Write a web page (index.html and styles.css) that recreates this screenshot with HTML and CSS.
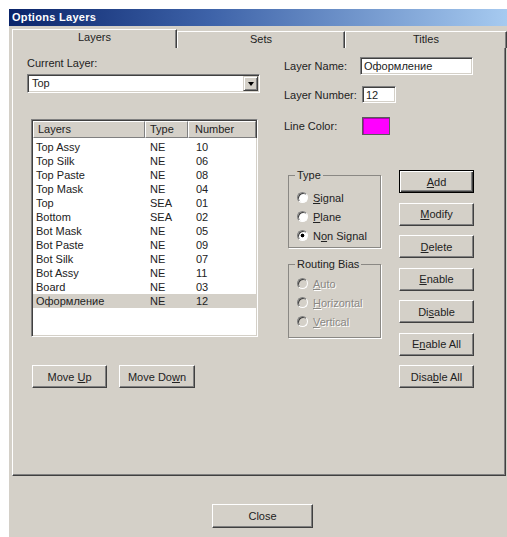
FILE: index.html
```html
<!DOCTYPE html>
<html lang="en">
<head>
<meta charset="utf-8">
<title>Options Layers</title>
<link rel="stylesheet" href="styles.css">
</head>
<body>
<div class="window">
  <div class="titlebar">Options Layers</div>

  <div class="tabs">
    <div class="tab active">Layers</div>
    <div class="tab">Sets</div>
    <div class="tab last">Titles</div>
  </div>

  <div class="panel">
    <div class="col-left">
      <div class="label">Current Layer:</div>
      <div class="combo sunken">
        <span class="combo-text">Top</span>
        <span class="combo-btn"><span class="arrow"></span></span>
      </div>

      <div class="listview sunken">
        <div class="lv-header">
          <div class="hcell">Layers</div>
          <div class="hcell">Type</div>
          <div class="hcell">Number</div>
        </div>
        <div class="lv-body">
          <div class="row"><span>Top Assy</span><span>NE</span><span>10</span></div>
          <div class="row"><span>Top Silk</span><span>NE</span><span>06</span></div>
          <div class="row"><span>Top Paste</span><span>NE</span><span>08</span></div>
          <div class="row"><span>Top Mask</span><span>NE</span><span>04</span></div>
          <div class="row"><span>Top</span><span>SEA</span><span>01</span></div>
          <div class="row"><span>Bottom</span><span>SEA</span><span>02</span></div>
          <div class="row"><span>Bot Mask</span><span>NE</span><span>05</span></div>
          <div class="row"><span>Bot Paste</span><span>NE</span><span>09</span></div>
          <div class="row"><span>Bot Silk</span><span>NE</span><span>07</span></div>
          <div class="row"><span>Bot Assy</span><span>NE</span><span>11</span></div>
          <div class="row"><span>Board</span><span>NE</span><span>03</span></div>
          <div class="row selected"><span>Оформление</span><span>NE</span><span>12</span></div>
        </div>
      </div>

      <div class="move-row">
        <button class="btn move-up">Move <u>U</u>p</button>
        <button class="btn move-down">Move Do<u>w</u>n</button>
      </div>
    </div>

    <div class="col-right">
      <div class="field f-name">
        <span class="flabel">Layer Name:</span>
        <span class="edit sunken name">Оформление</span>
      </div>
      <div class="field f-number">
        <span class="flabel">Layer Number:</span>
        <span class="edit sunken number">12</span>
      </div>
      <div class="field f-color">
        <span class="flabel">Line Color:</span>
        <span class="swatch"></span>
      </div>

      <div class="lower">
        <div class="groups">
          <fieldset class="group type-group">
            <legend>Type</legend>
            <div class="radio"><span class="rb"></span><span><u>S</u>ignal</span></div>
            <div class="radio"><span class="rb"></span><span><u>P</u>lane</span></div>
            <div class="radio"><span class="rb on"></span><span>N<u>o</u>n Signal</span></div>
          </fieldset>
          <fieldset class="group bias-group disabled">
            <legend>Routing Bias</legend>
            <div class="radio"><span class="rb"></span><span class="dim"><u>A</u>uto</span></div>
            <div class="radio"><span class="rb"></span><span class="dim"><u>H</u>orizontal</span></div>
            <div class="radio"><span class="rb"></span><span class="dim"><u>V</u>ertical</span></div>
          </fieldset>
        </div>
        <div class="actions">
          <button class="btn default"><u>A</u>dd</button>
          <button class="btn"><u>M</u>odify</button>
          <button class="btn"><u>D</u>elete</button>
          <button class="btn"><u>E</u>nable</button>
          <button class="btn">Di<u>s</u>able</button>
          <button class="btn">E<u>n</u>able All</button>
          <button class="btn">Disa<u>b</u>le All</button>
        </div>
      </div>
    </div>
  </div>

  <div class="footer">
    <button class="btn close">Close</button>
  </div>
</div>
</body>
</html>
```

FILE: styles.css
```css
html, body {
  margin: 0;
  padding: 0;
  background: #fff;
  overflow: hidden;
}

body {
  font: 11px "Liberation Sans", Arial, sans-serif;
  color: #222;
}

u {
  text-decoration: underline;
  text-underline-offset: 1px;
}

/* dialog frame */
.window {
  margin: 9px 0 0 9px;
  width: 498px;
  height: 528px;
  background: #d4d0c8;
}

.titlebar {
  height: 17px;
  line-height: 17px;
  padding-left: 3px;
  color: #fff;
  font-weight: bold;
  letter-spacing: 0.3px;
  background: linear-gradient(to right, #0a246a 0%, #3d62a8 40%, #a6caf0 100%);
}

/* tab strip */
.tabs {
  display: flex;
  align-items: flex-end;
  height: 19px;
  margin: 3px 0 -1px 3px;
}

.tab {
  box-sizing: border-box;
  width: 168px;
  height: 17px;
  line-height: 15px;
  text-align: center;
  background: #d4d0c8;
  border-top: 1px solid #fff;
  border-left: 1px solid #fff;
  border-right: 1px solid #404040;
  box-shadow: inset -1px 0 #808080;
}

.tab.active {
  position: relative;
  z-index: 1;
  width: 165px;
  height: 19px;
  line-height: 15px;
}

.tab.last {
  flex: 1;
}

/* tab page */
.panel {
  box-sizing: border-box;
  display: flex;
  margin-left: 3px;
  width: 494px;
  height: 429px;
  padding: 9px 0 0 14px;
  border: 1px solid;
  border-color: #fff #404040 #404040 #fff;
  box-shadow: inset -1px -1px #808080;
}

.sunken {
  box-sizing: border-box;
  background: #fff;
  border: 1px solid;
  border-color: #808080 #fff #fff #808080;
  box-shadow: inset 1px 1px #404040, inset -1px -1px #d4d0c8;
}

/* left column */
.col-left {
  width: 233px;
  display: flex;
  flex-direction: column;
}

.label {
  height: 13px;
  line-height: 13px;
}

.combo {
  display: flex;
  align-items: stretch;
  margin-top: 4px;
  height: 19px;
  padding: 1px;
}

.combo-text {
  flex: 1;
  padding-left: 3px;
  line-height: 15px;
}

.combo-btn {
  box-sizing: border-box;
  width: 15px;
  display: flex;
  align-items: center;
  justify-content: center;
  background: #d4d0c8;
  border: 1px solid;
  border-color: #d4d0c8 #404040 #404040 #d4d0c8;
  box-shadow: inset 1px 1px #fff, inset -1px -1px #808080;
}

.arrow {
  width: 0;
  height: 0;
  border-left: 3.5px solid transparent;
  border-right: 3.5px solid transparent;
  border-top: 4px solid #000;
}

.listview {
  margin: 26px 0 0 4px;
  width: 227px;
  height: 218px;
  padding: 1px;
}

.lv-header,
.row {
  display: grid;
  grid-template-columns: 112px 43px 1fr;
}

.lv-header {
  height: 17px;
}

.hcell {
  box-sizing: border-box;
  line-height: 15px;
  padding-left: 4px;
  background: #d4d0c8;
  border: 1px solid;
  border-color: #fff #808080 #808080 #fff;
  box-shadow: 1px 0 #404040;
}

.hcell:nth-child(3) {
  padding-left: 6px;
}

.lv-body {
  padding-top: 2px;
}

.row {
  height: 14px;
  line-height: 14px;
}

.row span:nth-child(1) { padding-left: 3px; }
.row span:nth-child(2) { padding-left: 5px; }
.row span:nth-child(3) { padding-left: 8px; }

.row.selected {
  background: #d4d0c8;
}

.move-row {
  display: flex;
  gap: 12px;
  margin: 28px 0 0 5px;
}

/* push buttons */
.btn {
  box-sizing: border-box;
  height: 23px;
  padding: 0;
  font: inherit;
  color: inherit;
  text-align: center;
  background: #d4d0c8;
  border: 1px solid;
  border-color: #fff #404040 #404040 #fff;
  box-shadow: inset -1px -1px #808080;
}

.btn.default {
  border-color: #000;
  box-shadow: inset 1px 1px #fff, inset -1px -1px #404040, inset -2px -2px #808080;
}

.move-up { width: 75px; }
.move-down { width: 76px; }

/* right column */
.col-right {
  margin-left: 24px;
  display: flex;
  flex-direction: column;
}

.field {
  display: flex;
  align-items: center;
}

.flabel {
  width: 76px;
}

.f-name { height: 18px; }
.f-number { height: 17px; margin-top: 11px; }
.f-color { height: 18px; margin-top: 14px; }

.edit {
  height: 100%;
  line-height: 16px;
  padding-left: 3px;
}

.edit.name { width: 113px; }
.edit.number { width: 34px; margin-left: 2px; }

.swatch {
  box-sizing: border-box;
  width: 28px;
  height: 18px;
  margin-left: 2px;
  background: #ff00ff;
  border: 1px solid #5a5a5a;
  box-shadow: inset 1px 1px #b000b0;
}

.lower {
  display: flex;
  margin-top: 35px;
}

.groups {
  margin-left: 4px;
  width: 93px;
}

.group {
  box-sizing: border-box;
  width: 93px;
  margin: 0;
  min-width: 0;
  border: 1px solid #8a8884;
  box-shadow: 1px 1px 0 #fff;
}

.group legend {
  padding: 0 2px;
  margin-left: -2px;
  line-height: 13px;
}

.type-group {
  margin-top: -1px;
  padding: 6px 0 2px 8px;
}

.bias-group {
  margin-top: 10px;
  padding: 3px 0 6px 8px;
}

.radio {
  display: flex;
  align-items: center;
  gap: 5px;
  height: 19px;
}

.rb {
  box-sizing: border-box;
  width: 11px;
  height: 11px;
  border-radius: 50%;
  background: #fff;
  border: 1px solid;
  border-color: #808080 #fff #fff #808080;
  box-shadow: inset 1px 1px #404040;
}

.rb.on {
  background: radial-gradient(circle, #000 0 1.6px, #fff 2.2px);
}

.disabled .rb {
  background: #d4d0c8;
}

.dim {
  color: #8a8884;
  text-shadow: 1px 1px #fff;
}

.actions {
  margin-left: 18px;
  width: 75px;
  display: flex;
  flex-direction: column;
  gap: 9.5px;
}

.actions .btn {
  width: 75px;
}

/* bottom strip */
.footer {
  margin: 28px 0 0 203px;
}

.close {
  width: 101px;
  height: 24px;
}
```
